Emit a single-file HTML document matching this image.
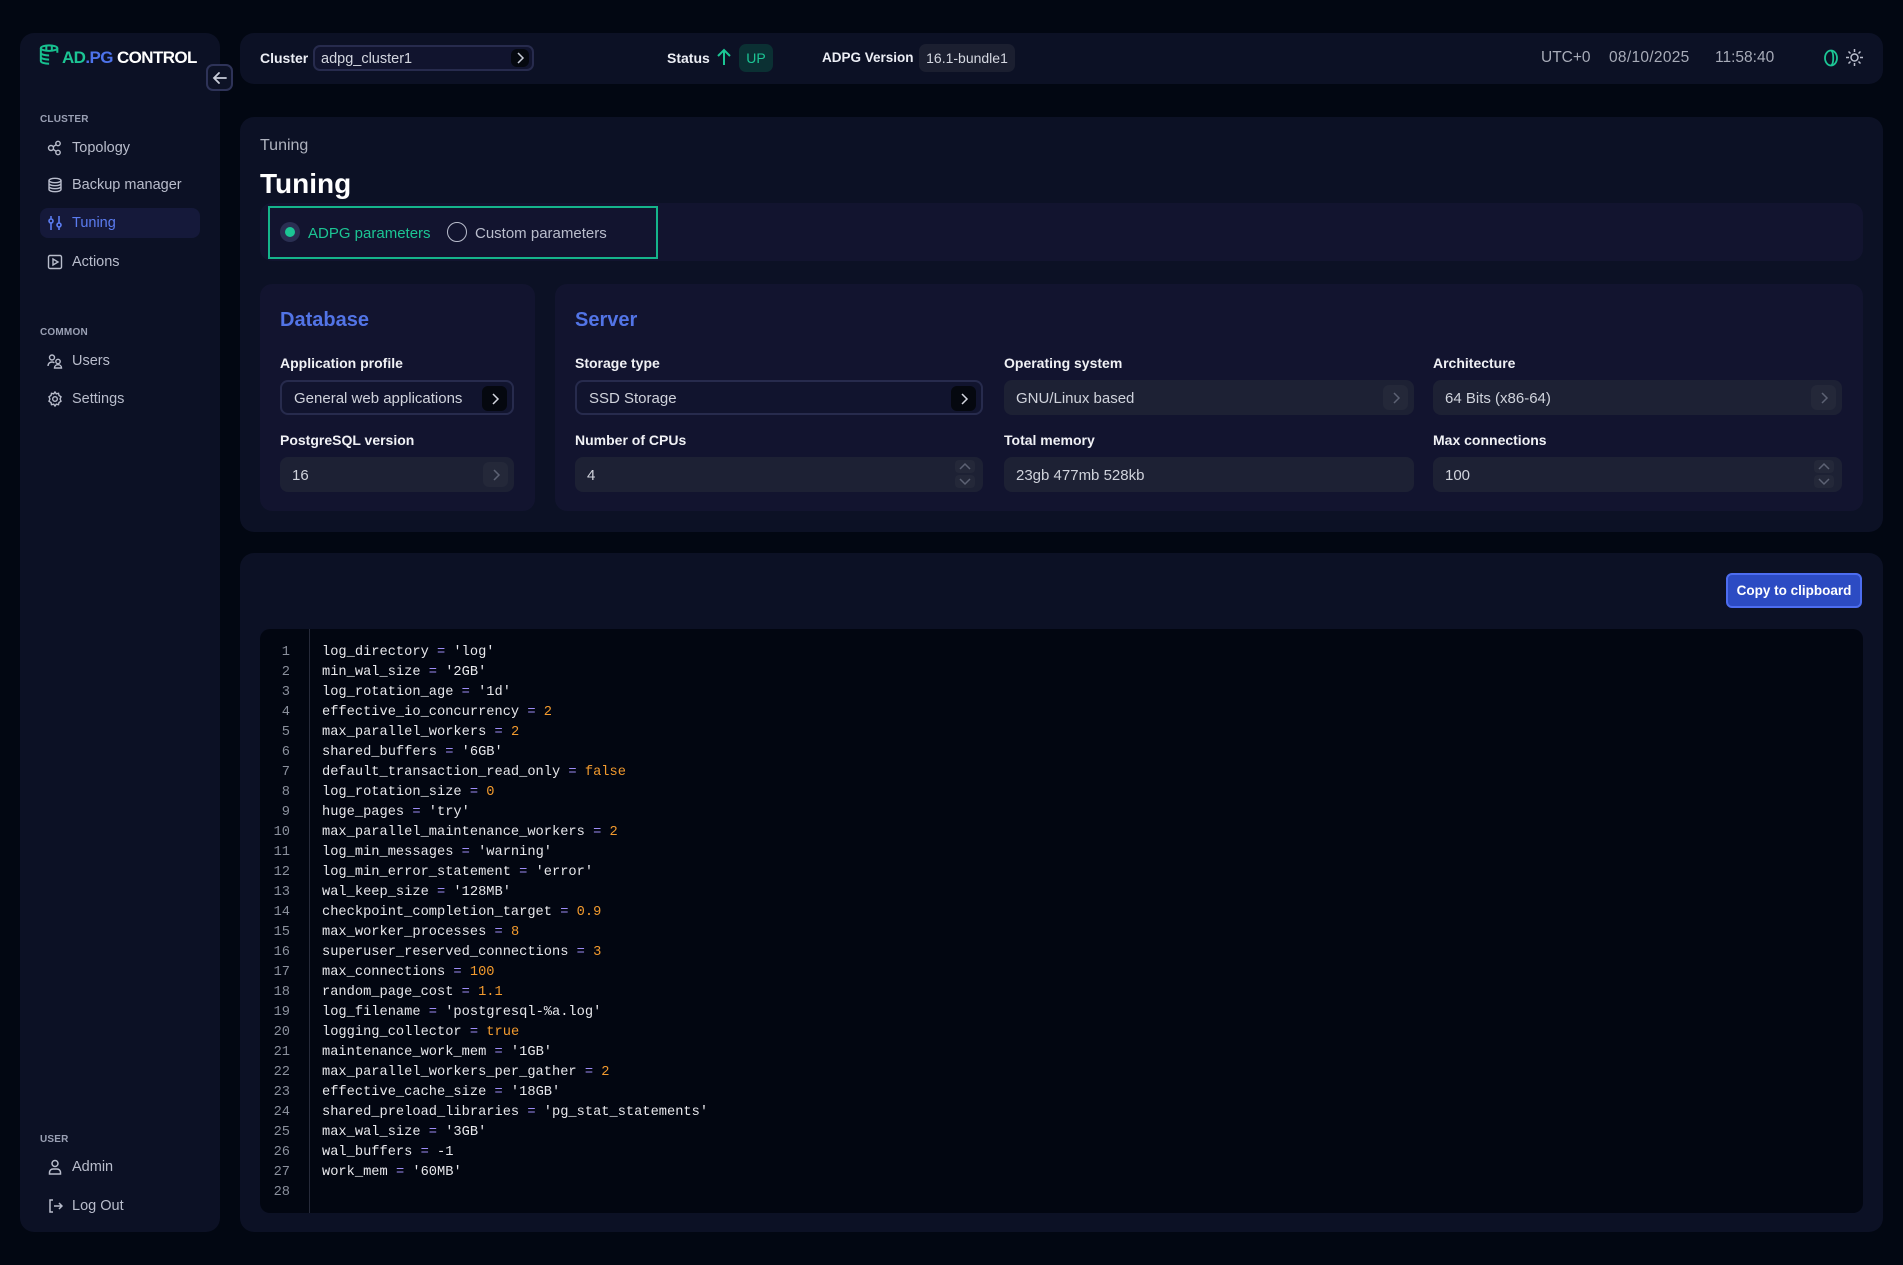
<!DOCTYPE html>
<html><head><meta charset="utf-8">
<style>
*{box-sizing:border-box;margin:0;padding:0}
body{width:1903px;height:1265px;background:#020712;font-family:"Liberation Sans",sans-serif;color:#e8e9ef;position:relative;overflow:hidden}
.abs{position:absolute}
.panel{background:#0c1125;border-radius:14px}
.side{left:20px;top:33px;width:200px;height:1199px}
.sec{font-size:10px;color:#9aa0b4;left:40px;font-weight:bold;letter-spacing:.2px}
.item{left:40px;height:30px;width:160px;display:flex;align-items:center;font-size:14.5px;color:#b9bdcc;padding-left:7px}
.item svg{width:16px;height:16px;margin-right:9px;flex:none}
.item.act{background:#15193a;border-radius:8px;color:#5b7cf0}
.top{left:240px;top:33px;width:1643px;height:51px}
.tl{font-size:14px;font-weight:bold;color:#eceef5;top:50px}
.badge{border-radius:7px;font-size:14px;display:flex;align-items:center;justify-content:center}
.inp{border-radius:8px;background:#1d2134;display:flex;align-items:center;padding-left:12px;font-size:15px;color:#d0d3dc;padding-top:1px}
.inp.sel{background:#11142e;border:2px solid #272b4d}
.chev{position:absolute;right:6px;top:5px;width:25px;height:25px;border-radius:6px;background:#242839;display:flex;align-items:center;justify-content:center}
.inp.sel .chev{background:#05080f;top:4px;right:5px}
.lbl{font-size:14px;font-weight:bold;color:#f0f1f5}
.code{font-family:"Liberation Mono",monospace;font-size:13.7px;line-height:20px;color:#e8e8ec;white-space:pre}
.ln{font-family:"Liberation Mono",monospace;font-size:13.7px;line-height:20px;color:#8a8f9c;text-align:right;white-space:pre}
.o{color:#9d8cf5}.n{color:#f29a2e}
</style></head><body>

<div class="abs panel side"></div>
<svg class="abs" style="left:39px;top:44px" width="22" height="22" viewBox="0 0 24 24" fill="none" stroke="#17c08f" stroke-width="2.2"><ellipse cx="11" cy="4.5" rx="9" ry="3"/><path d="M2 4.5v14c0 1.7 4 3 9 3M2 9.5c0 1.7 4 3 9 3M2 14c0 1.7 4 3 9 3M20 4.5v5"/><path d="M8 2v5M14 2v5"/></svg>
<div class="abs" style="left:62px;top:48px;font-size:17px;font-weight:bold;letter-spacing:-.6px;white-space:nowrap"><span style="color:#1cc594">AD</span><span style="color:#4d73ea">.PG</span> <span style="color:#fff">CONTROL</span></div>
<div class="abs" style="left:206px;top:64px;width:27px;height:27px;border:2px solid #2e3358;border-radius:7px;background:#0d1226;display:flex;align-items:center;justify-content:center"><svg width="16" height="16" viewBox="0 0 16 16" fill="none" stroke="#c8ccd8" stroke-width="1.8" stroke-linecap="round"><path d="M14 8H2M7 3L2 8l5 5"/></svg></div>

<div class="abs sec" style="top:114px">CLUSTER</div>
<div class="abs item" style="top:133px"><svg viewBox="0 0 16 16" fill="none" stroke="#b9bdcc" stroke-width="1.4"><circle cx="4" cy="8" r="2.5"/><circle cx="11" cy="3.5" r="2.2"/><circle cx="11" cy="12.5" r="2.2"/><path d="M6 6.8l3-2M6 9.2l3 2"/></svg>Topology</div>
<div class="abs item" style="top:170px"><svg viewBox="0 0 16 16" fill="none" stroke="#b9bdcc" stroke-width="1.4"><ellipse cx="8" cy="3.5" rx="6" ry="2.2"/><path d="M2 3.5v9c0 1.2 2.7 2.2 6 2.2s6-1 6-2.2v-9M2 6.5c0 1.2 2.7 2.2 6 2.2s6-1 6-2.2M2 9.5c0 1.2 2.7 2.2 6 2.2s6-1 6-2.2"/></svg>Backup manager</div>
<div class="abs item act" style="top:208px"><svg viewBox="0 0 16 16" fill="none" stroke="#5b7cf0" stroke-width="1.6"><path d="M4 1v14M12 1v14"/><circle cx="4" cy="6" r="2" fill="#15193a"/><circle cx="12" cy="10" r="2" fill="#15193a"/></svg>Tuning</div>
<div class="abs item" style="top:247px"><svg viewBox="0 0 16 16" fill="none" stroke="#b9bdcc" stroke-width="1.4"><rect x="1.5" y="1.5" width="13" height="13" rx="1.5"/><path d="M6 5v6l5-3z"/></svg>Actions</div>

<div class="abs sec" style="top:327px">COMMON</div>
<div class="abs item" style="top:346px"><svg viewBox="0 0 16 16" fill="none" stroke="#b9bdcc" stroke-width="1.4"><circle cx="5" cy="4.5" r="2.5"/><path d="M1 13c0-2.5 1.8-4 4-4 1 0 1.8.3 2.4.8"/><circle cx="11" cy="8.5" r="2.2"/><path d="M7.5 15c0-2 1.5-3.3 3.5-3.3s3.5 1.3 3.5 3.3z"/></svg>Users</div>
<div class="abs item" style="top:384px"><svg viewBox="0 0 16 16" fill="none" stroke="#b9bdcc" stroke-width="1.4"><circle cx="8" cy="8" r="2.3"/><path d="M8 1l1.3 1.8 2.2-.5.5 2.2L14 5.8l-.9 2.2.9 2.2-2 1.3-.5 2.2-2.2-.5L8 15l-1.3-1.8-2.2.5-.5-2.2L2 10.2l.9-2.2L2 5.8l2-1.3.5-2.2 2.2.5z"/></svg>Settings</div>

<div class="abs sec" style="top:1134px">USER</div>
<div class="abs item" style="top:1152px"><svg viewBox="0 0 16 16" fill="none" stroke="#b9bdcc" stroke-width="1.5"><circle cx="8" cy="4.5" r="3"/><path d="M2.5 15v-1.5c0-2 1.5-3.5 3.5-3.5h4c2 0 3.5 1.5 3.5 3.5V15z"/></svg>Admin</div>
<div class="abs item" style="top:1191px"><svg viewBox="0 0 16 16" fill="none" stroke="#b9bdcc" stroke-width="1.5"><path d="M6 2H3v12h3M7 8h8M12 5l3 3-3 3"/></svg>Log Out</div>

<div class="abs panel top"></div>
<div class="abs tl" style="left:260px">Cluster</div>
<div class="abs inp sel" style="left:313px;top:45px;width:221px;height:26px;font-size:14.5px;padding-left:6px;border-radius:7px;color:#d4d7e0">adpg_cluster1<div class="chev" style="top:2px;right:3px;width:18px;height:18px"><svg width="10" height="12" viewBox="0 0 10 12" fill="none" stroke="#c8ccd8" stroke-width="1.5"><path d="M3 1l5 5-5 5"/></svg></div></div>
<div class="abs tl" style="left:667px">Status</div>
<svg class="abs" style="left:716px;top:48px" width="16" height="18" viewBox="0 0 16 18" fill="none" stroke="#1cc594" stroke-width="2"><path d="M8 17V2M2 8l6-6 6 6"/></svg>
<div class="abs badge" style="left:739px;top:44px;width:34px;height:28px;background:#0b3033;color:#1cc594">UP</div>
<div class="abs tl" style="left:822px;font-size:13.5px">ADPG Version</div>
<div class="abs badge" style="left:919px;top:44px;width:96px;height:28px;background:#1b1f30;color:#d4d7e0;font-size:14px">16.1-bundle1</div>
<div class="abs" style="left:1541px;top:49px;font-size:15.5px;color:#a7abb8">UTC+0</div>
<div class="abs" style="left:1609px;top:49px;font-size:15.5px;color:#a7abb8;letter-spacing:.3px">08/10/2025</div>
<div class="abs" style="left:1715px;top:49px;font-size:15.5px;color:#a7abb8">11:58:40</div>
<svg class="abs" style="left:1823px;top:49px" width="16" height="18" viewBox="0 0 16 18" fill="none" stroke="#1cc594" stroke-width="1.8"><ellipse cx="8" cy="9" rx="6" ry="7.5"/><path d="M8 1.5c3 1.5 3 13.5 0 15"/></svg>
<svg class="abs" style="left:1846px;top:49px" width="17" height="17" viewBox="0 0 17 17" fill="none" stroke="#b9bdcc" stroke-width="1.5"><circle cx="8.5" cy="8.5" r="3.5"/><path d="M8.5 0v3M8.5 14v3M0 8.5h3M14 8.5h3M2.5 2.5l2 2M12.5 12.5l2 2M2.5 14.5l2-2M12.5 4.5l2-2"/></svg>

<div class="abs panel" style="left:240px;top:117px;width:1643px;height:415px"></div>
<div class="abs" style="left:260px;top:137px;font-size:16px;color:#aeb2be">Tuning</div>
<div class="abs" style="left:260px;top:168px;font-size:28px;font-weight:bold;color:#fff">Tuning</div>
<div class="abs" style="left:260px;top:203px;width:1603px;height:58px;background:#12142f;border-radius:12px"></div>
<div class="abs" style="left:268px;top:206px;width:390px;height:53px;border:2px solid #15b48b"></div>
<div class="abs" style="left:280px;top:222px;width:20px;height:20px;border-radius:50%;background:#2a2f52;display:flex;align-items:center;justify-content:center"><div style="width:10px;height:10px;border-radius:50%;background:#1cc594"></div></div>
<div class="abs" style="left:308px;top:225px;font-size:15px;color:#1cc594">ADPG parameters</div>
<div class="abs" style="left:447px;top:222px;width:20px;height:20px;border-radius:50%;border:1.5px solid #b9bdcc"></div>
<div class="abs" style="left:475px;top:225px;font-size:15px;color:#b9bdcc">Custom parameters</div>

<div class="abs" style="left:260px;top:284px;width:275px;height:227px;background:#12142f;border-radius:12px"></div>
<div class="abs" style="left:555px;top:284px;width:1308px;height:227px;background:#12142f;border-radius:12px"></div>
<div class="abs" style="left:280px;top:309px;font-size:20px;font-weight:bold;color:#5274e6">Database</div>
<div class="abs" style="left:575px;top:309px;font-size:20px;font-weight:bold;color:#5274e6">Server</div>

<div class="abs lbl" style="left:280px;top:355px">Application profile</div>
<div class="abs inp sel" style="left:280px;top:380px;width:234px;height:35px">General web applications<div class="chev"><svg width="10" height="14" viewBox="0 0 10 14" fill="none" stroke="#d4d7e0" stroke-width="1.5"><path d="M3 2l5 5-5 5"/></svg></div></div>
<div class="abs lbl" style="left:280px;top:432px">PostgreSQL version</div>
<div class="abs inp" style="left:280px;top:457px;width:234px;height:35px">16<div class="chev"><svg width="10" height="14" viewBox="0 0 10 14" fill="none" stroke="#5d6274" stroke-width="1.5"><path d="M3 2l5 5-5 5"/></svg></div></div>

<div class="abs lbl" style="left:575px;top:355px">Storage type</div>
<div class="abs inp sel" style="left:575px;top:380px;width:408px;height:35px">SSD Storage<div class="chev"><svg width="10" height="14" viewBox="0 0 10 14" fill="none" stroke="#d4d7e0" stroke-width="1.5"><path d="M3 2l5 5-5 5"/></svg></div></div>
<div class="abs lbl" style="left:575px;top:432px">Number of CPUs</div>
<div class="abs inp" style="left:575px;top:457px;width:408px;height:35px">4<svg class="abs" style="right:8px;top:3px" width="20" height="29" viewBox="0 0 20 29" fill="none" stroke="#5d6274" stroke-width="1.5"><rect x="0" y="0" width="20" height="13" rx="4" fill="#242839" stroke="none"/><rect x="0" y="15" width="20" height="13" rx="4" fill="#242839" stroke="none"/><path d="M5 9l5-5 5 5M5 19l5 5 5-5"/></svg></div>

<div class="abs lbl" style="left:1004px;top:355px">Operating system</div>
<div class="abs inp" style="left:1004px;top:380px;width:410px;height:35px">GNU/Linux based<div class="chev"><svg width="10" height="14" viewBox="0 0 10 14" fill="none" stroke="#5d6274" stroke-width="1.5"><path d="M3 2l5 5-5 5"/></svg></div></div>
<div class="abs lbl" style="left:1004px;top:432px">Total memory</div>
<div class="abs inp" style="left:1004px;top:457px;width:410px;height:35px">23gb 477mb 528kb</div>

<div class="abs lbl" style="left:1433px;top:355px">Architecture</div>
<div class="abs inp" style="left:1433px;top:380px;width:409px;height:35px">64 Bits (x86-64)<div class="chev"><svg width="10" height="14" viewBox="0 0 10 14" fill="none" stroke="#5d6274" stroke-width="1.5"><path d="M3 2l5 5-5 5"/></svg></div></div>
<div class="abs lbl" style="left:1433px;top:432px">Max connections</div>
<div class="abs inp" style="left:1433px;top:457px;width:409px;height:35px">100<svg class="abs" style="right:8px;top:3px" width="20" height="29" viewBox="0 0 20 29" fill="none" stroke="#5d6274" stroke-width="1.5"><rect x="0" y="0" width="20" height="13" rx="4" fill="#242839" stroke="none"/><rect x="0" y="15" width="20" height="13" rx="4" fill="#242839" stroke="none"/><path d="M5 9l5-5 5 5M5 19l5 5 5-5"/></svg></div>

<div class="abs panel" style="left:240px;top:553px;width:1643px;height:679px"></div>
<div class="abs" style="left:1726px;top:573px;width:136px;height:35px;background:#2c4bc3;border:2px solid #4d6df0;border-radius:6px;color:#fff;font-size:13.5px;font-weight:bold;display:flex;align-items:center;justify-content:center">Copy to clipboard</div>
<div class="abs" style="left:260px;top:629px;width:1603px;height:584px;background:#020611;border-radius:10px"></div>
<div class="abs" style="left:309px;top:629px;width:1px;height:584px;background:#262a3a"></div>
<div class="abs ln" style="left:270px;top:643px;width:20px">1
2
3
4
5
6
7
8
9
10
11
12
13
14
15
16
17
18
19
20
21
22
23
24
25
26
27
28</div>
<div class="abs code" style="left:322px;top:643px">log_directory <span class="o">=</span> 'log'
min_wal_size <span class="o">=</span> '2GB'
log_rotation_age <span class="o">=</span> '1d'
effective_io_concurrency <span class="o">=</span> <span class="n">2</span>
max_parallel_workers <span class="o">=</span> <span class="n">2</span>
shared_buffers <span class="o">=</span> '6GB'
default_transaction_read_only <span class="o">=</span> <span class="n">false</span>
log_rotation_size <span class="o">=</span> <span class="n">0</span>
huge_pages <span class="o">=</span> 'try'
max_parallel_maintenance_workers <span class="o">=</span> <span class="n">2</span>
log_min_messages <span class="o">=</span> 'warning'
log_min_error_statement <span class="o">=</span> 'error'
wal_keep_size <span class="o">=</span> '128MB'
checkpoint_completion_target <span class="o">=</span> <span class="n">0.9</span>
max_worker_processes <span class="o">=</span> <span class="n">8</span>
superuser_reserved_connections <span class="o">=</span> <span class="n">3</span>
max_connections <span class="o">=</span> <span class="n">100</span>
random_page_cost <span class="o">=</span> <span class="n">1.1</span>
log_filename <span class="o">=</span> 'postgresql-%a.log'
logging_collector <span class="o">=</span> <span class="n">true</span>
maintenance_work_mem <span class="o">=</span> '1GB'
max_parallel_workers_per_gather <span class="o">=</span> <span class="n">2</span>
effective_cache_size <span class="o">=</span> '18GB'
shared_preload_libraries <span class="o">=</span> 'pg_stat_statements'
max_wal_size <span class="o">=</span> '3GB'
wal_buffers <span class="o">=</span> -1
work_mem <span class="o">=</span> '60MB'
</div>
</body></html>
